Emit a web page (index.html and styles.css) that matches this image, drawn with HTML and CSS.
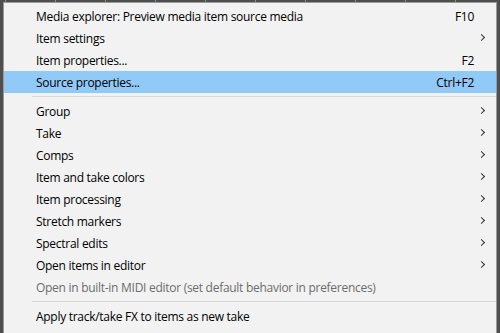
FILE: index.html
```html
<!DOCTYPE html>
<html lang="en">
<head>
    <meta charset="UTF-8">
    <title>Item context menu</title>
    <link rel="stylesheet" href="styles.css">
</head>
<body>
    <div class="timeline"></div>
    <div class="menu">
        <div class="item"><span class="label">Media explorer: Preview media item source media</span><span class="key">F10</span></div>
        <div class="item sub"><span class="label">Item settings</span></div>
        <div class="item"><span class="label">Item properties...</span><span class="key">F2</span></div>
        <div class="item hover"><span class="label">Source properties...</span><span class="key">Ctrl+F2</span></div>
        <div class="sep"></div>
        <div class="item sub"><span class="label">Group</span></div>
        <div class="item sub"><span class="label">Take</span></div>
        <div class="item sub"><span class="label">Comps</span></div>
        <div class="item sub"><span class="label">Item and take colors</span></div>
        <div class="item sub"><span class="label">Item processing</span></div>
        <div class="item sub"><span class="label">Stretch markers</span></div>
        <div class="item sub"><span class="label">Spectral edits</span></div>
        <div class="item sub"><span class="label">Open items in editor</span></div>
        <div class="item disabled"><span class="label">Open in built-in MIDI editor (set default behavior in preferences)</span></div>
        <div class="sep"></div>
        <div class="item"><span class="label">Apply track/take FX to items as new take</span></div>
    </div>
</body>
</html>
```

FILE: styles.css
```css
html, body {
    margin: 0;
    padding: 0;
    height: 100%;
    overflow: hidden;
    background-color: #4f4f4f;
    font-family: 'Open Sans', sans-serif;
    font-size: 12px;
}
.timeline {
    height: 2px;
    background: repeating-linear-gradient(90deg, #4f4f4f 0, #4f4f4f 5px, #8a8a8a 5px, #8a8a8a 6px, #4f4f4f 6px, #4f4f4f 50px);
}
.menu {
    margin-left: 3px;
    width: 492px;
    height: 340px;
    background-color: #f2f2f2;
    border: 1px solid #9a9a9a;
    border-bottom: none;
    padding-top: 2px;
    color: #000;
    letter-spacing: -0.28px;
}
.item {
    display: flex;
    align-items: center;
    height: 22px;
    padding-left: 32px;
    padding-right: 22px;
    position: relative;
}
.item .label {
    flex: 1;
    white-space: nowrap;
    padding-top: 1px;
}
.item .key {
    white-space: nowrap;
    padding-top: 1px;
}
.item.hover {
    background-color: #91c9f7;
}
.item.disabled {
    color: #6d6d6d;
}
.item.sub::after {
    content: '';
    position: absolute;
    right: 12px;
    top: 8px;
    width: 4px;
    height: 4px;
    border-top: 1px solid #333;
    border-right: 1px solid #333;
    transform: rotate(45deg);
}
.sep {
    height: 7px;
    margin-left: 28px;
    position: relative;
}
.sep::before {
    content: '';
    position: absolute;
    left: 0;
    right: 0;
    top: 3px;
    height: 1px;
    background-color: #d7d7d7;
}
```
